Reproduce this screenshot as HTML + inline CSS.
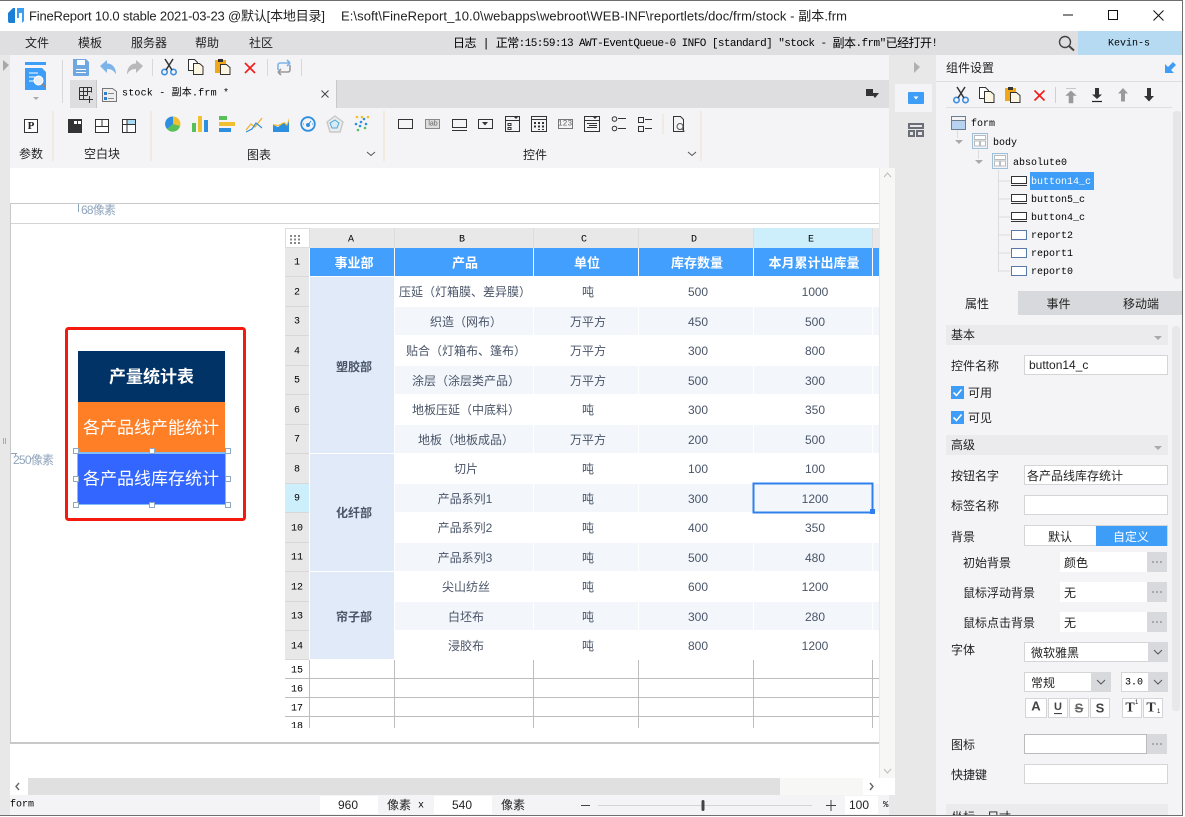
<!DOCTYPE html>
<html lang="zh"><head><meta charset="utf-8"><title>FineReport</title>
<style>
html,body{margin:0;padding:0;width:1185px;height:817px;overflow:hidden;background:#fff}
svg{display:block}
text{font-family:"Liberation Sans","Noto Sans CJK SC",sans-serif;font-size:12px;fill:#222;dominant-baseline:central;white-space:pre;transform:translateY(1px)}
.m{font-family:"Liberation Mono","Noto Sans CJK SC",monospace;font-size:10px;fill:#000}
.c{text-anchor:middle}
.t{fill:#4a5568}
.h{fill:#fff;font-weight:700;font-size:13px}
.b{font-weight:700;fill:#4a5568}
.r{shape-rendering:crispEdges}
.i{fill:none;stroke:#333;stroke-width:1}
</style></head><body>
<svg width="1185" height="817" viewBox="0 0 1185 817" xmlns="http://www.w3.org/2000/svg">
<defs>
<g id="sc"><circle cx="3.5" cy="13" r="2.7" fill="none" stroke="#3d8fe0" stroke-width="1.6"/><circle cx="12.5" cy="13" r="2.7" fill="none" stroke="#3d8fe0" stroke-width="1.6"/><path d="M5 11 12 0M11 11 4 0" stroke="#333" stroke-width="1.5" fill="none"/></g>
<g id="cp"><path d="M.5.5h6l3 3v8h-9z" fill="#fff" stroke="#333"/><path d="M5.5 4.5h6l3.500 3v8h-9.500z" fill="#fdf6e3" stroke="#333"/></g>
<g id="pa"><rect x="0" y="1" width="11" height="13" fill="#f0a818"/><rect x="3" y="0" width="5" height="3" fill="#333"/><path d="M5.500 5.500h6l3.500 3v7h-9.500z" fill="#fdf6e3" stroke="#333"/></g>
<g id="x"><path d="M.5.500 10.500 10.500M10.500.500.500 10.500" stroke="#f02020" stroke-width="1.700" fill="none"/></g>
<g id="bi"><rect x=".5" y=".5" width="15" height="7" fill="#fff" stroke="#333"/><path d="M0 9.500h16" stroke="#333"/></g>
<g id="ri"><rect x=".5" y=".5" width="15" height="9" fill="#fff" stroke="#5878a8"/></g>
<g id="ci"><rect x=".5" y=".5" width="15" height="15" fill="#eef4fa" stroke="#9dbfd8"/><rect x="2.500" y="2.500" width="11" height="4" fill="#fff" stroke="#bbb"/><rect x="2.500" y="8" width="5" height="5" fill="#fff" stroke="#bbb"/><rect x="8.500" y="8" width="5" height="5" fill="#fff" stroke="#bbb"/></g>
<g id="dd"><rect x="0" y="0" width="20" height="20" fill="#d8d9dc"/><path d="M6 8l4 4 4-4" fill="none" stroke="#555"/></g>
<g id="dots"><rect x="0" y="0" width="20" height="20" fill="#d8d9dc"/><path d="M5 10h2M9 10h2M13 10h2" stroke="#777" stroke-width="1"/></g>
</defs>

<!-- base -->
<rect class="r" width="1185" height="817" fill="#fff"/>
<rect class="r" x="0" y="0" width="1183" height="1" fill="#6e6e6e"/>
<rect class="r" x="0" y="31" width="1182" height="24" fill="#dfdfe1"/>
<rect class="r" x="0" y="55" width="10" height="760" fill="#e8e8e8"/>
<rect class="r" x="10" y="55" width="879" height="113" fill="#f4f4f6"/>
<rect class="r" x="70" y="80" width="819" height="28" fill="#dedee0"/>
<rect class="r" x="889" y="55" width="47" height="760" fill="#e8e8e8"/>
<rect class="r" x="936" y="55" width="246" height="760" fill="#f4f4f6"/>
<rect class="r" x="880" y="168" width="15" height="610" fill="#f7f7f5"/>
<rect class="r" x="1182" y="0" width="1" height="816" fill="#6e6e6e"/>
<rect class="r" x="0" y="815" width="1183" height="1" fill="#6e6e6e"/>

<!-- title -->
<path d="M8 13L13 8h2v15h-5q-2 0-2-2z" fill="#1b7fd6"/><path d="M17 8h7v13l-2 2V13h-3v5h-2z" fill="#3d9df0"/>
<text x="29" y="15" style="font-size:13px" textLength="296" lengthAdjust="spacing">FineReport 10.0 stable 2021-03-23 @默认[本地目录]</text>
<text x="341" y="15" style="font-size:13px" textLength="506" lengthAdjust="spacing">E:\soft\FineReport_10.0\webapps\webroot\WEB-INF\reportlets/doc/frm/stock - 副本.frm</text>
<path d="M1063 15h10" stroke="#111" fill="none"/>
<rect x="1108.500" y="10.500" width="9" height="9" fill="none" stroke="#111"/>
<path d="M1153.500 10.500l10 10M1163.500 10.500l-10 10" stroke="#111" fill="none"/>

<!-- menu -->
<text x="25" y="42">文件</text><text x="78" y="42">模板</text><text x="131" y="42">服务器</text><text x="195" y="42">帮助</text><text x="249" y="42">社区</text>
<text x="453" y="43" class="m" style="font-size:11px" textLength="485" lengthAdjust="spacing"><tspan style="font-size:12px">日志 | 正常</tspan>:15:59:13 AWT-EventQueue-0 INFO [standard] "stock - <tspan style="font-size:12px">副本</tspan>.frm"<tspan style="font-size:12px">已经打开</tspan>!</text>
<circle cx="1065" cy="42" r="5.500" fill="none" stroke="#444" stroke-width="1.400"/><path d="M1069 46l5 4.500" stroke="#444" stroke-width="2"/>
<rect class="r" x="1078" y="31" width="104" height="24" fill="#b5daf2"/>
<text x="1129" y="43" class="m c" style="font-size:10px">Kevin-s</text>

<!-- toolbar top -->
<path d="M3 60l6 5-6 6z" fill="#a8a8a8"/>
<rect class="r" x="25" y="62" width="21" height="3" fill="#3d9df7"/>
<path d="M25 68h17l4 4v18H25z" fill="#3d9df7"/>
<path d="M29 73h9M29 77h6M29 81h5" stroke="#fff" fill="none"/>
<circle cx="38.500" cy="80.500" r="4.500" fill="#e8eef5" stroke="#fff"/><path d="M42 84l3 3" stroke="#888" stroke-width="2"/>
<path d="M33 97h6l-3 3z" fill="#aaa"/>
<rect class="r" x="62" y="60" width="1" height="43" fill="#d8d8d8"/>
<path d="M73 59h13l3 3v13a1 1 0 0 1-1 1H74a1 1 0 0 1-1-1z" fill="#6fa8e0"/><rect class="r" x="77" y="60" width="8" height="5" fill="#fff"/><rect class="r" x="76" y="69" width="10" height="1" fill="#fff"/><rect class="r" x="76" y="72" width="10" height="1" fill="#fff"/>
<path d="M100 66l7-6v3.500c5 0 9 3.500 9 11-2-4-5-5.500-9-5.500V73z" fill="#7db3e8"/>
<path d="M143 66l-7-6v3.500c-5 0-9 3.500-9 11 2-4 5-5.500 9-5.500V73z" fill="#b8b8ba"/>
<rect class="r" x="152" y="59" width="1" height="17" fill="#d8d8d8"/>
<use href="#sc" x="161" y="59"/><use href="#cp" x="188" y="59"/><use href="#pa" x="215" y="59"/><use href="#x" x="244.500" y="62.500"/>
<rect class="r" x="267" y="59" width="1" height="17" fill="#d8d8d8"/>
<path d="M278 70v-5a2 2 0 0 1 2-2h10M290 63l-3-3M290 63l-3 3" fill="none" stroke="#7db3e8" stroke-width="1.600"/>
<path d="M290 65v5a2 2 0 0 1-2 2h-10M278 72l3 3M278 72l3-3" fill="none" stroke="#999" stroke-width="1.600"/>
<rect class="r" x="301" y="59" width="1" height="17" fill="#d8d8d8"/>

<!-- tabs -->
<rect class="r" x="97" y="80" width="239" height="28" fill="#f4f4f6"/>
<rect class="r" x="96" y="80" width="1" height="28" fill="#c8c8ca"/><rect class="r" x="336" y="80" width="1" height="28" fill="#c8c8ca"/>
<path d="M79.500 87.500h12v5M79.500 87.500v12h7M83.500 87.500v12M87.500 87.500v8M79.500 91.500h12M79.500 95.500h8M89.500 96v7M86 99.500h7" stroke="#333" fill="none"/>
<path d="M102.500 88.500h10l4 3v10h-14z" fill="#eee" stroke="#777"/><rect class="r" x="104" y="92" width="3" height="3" fill="#2f7fd0"/><rect class="r" x="104" y="97" width="3" height="3" fill="#2f7fd0"/><path d="M108 93.500h6M108 98.500h6" stroke="#888"/>
<text x="122" y="93" class="m" style="font-size:10px" textLength="107" lengthAdjust="spacing">stock - 副本.frm *</text>
<path d="M321.500 90.500l7 7M328.500 90.500l-7 7" stroke="#444" fill="none"/>
<rect class="r" x="866" y="89" width="7" height="7" fill="#333"/><path d="M871 93h8l-4 5z" fill="#333"/>

<!-- ribbon -->
<rect x="24.500" y="119.500" width="13" height="13" fill="#fff" stroke="#333"/>
<text x="31" y="125" class="c" style="font-family:'Liberation Serif',serif;font-weight:700;font-size:11px">P</text>
<rect class="r" x="52" y="111" width="2" height="50" fill="#efebe0"/>
<rect class="r" x="68" y="119" width="14" height="14" fill="#333"/><rect class="r" x="74" y="121" width="3" height="3" fill="#fff"/><rect class="r" x="78" y="121" width="3" height="3" fill="#fff"/>
<rect x="95.500" y="119.500" width="13" height="13" fill="#fff" stroke="#333"/><path d="M95.500 126.500h13M102 119.500v7" stroke="#333"/>
<rect x="122.500" y="119.500" width="13" height="13" fill="#fff" stroke="#333"/><rect class="r" x="127" y="120" width="8" height="4" fill="#a9dcf3"/><path d="M122.500 124.500h13M127 119.500v13" stroke="#333"/>
<rect class="r" x="150" y="111" width="2" height="50" fill="#efebe0"/>
<!-- charts -->
<circle cx="173" cy="124" r="7.500" fill="#f0c030"/><path d="M173 124l7 2a7.500 7.500 0 0 1-13 3z" fill="#58c058"/><path d="M173 124l-6 5a7.500 7.500 0 0 1 6-12.500z" fill="#2d8fe0"/>
<rect class="r" x="192" y="123" width="4" height="9" fill="#58c058"/><rect class="r" x="198" y="116" width="4" height="16" fill="#f0c030"/><rect class="r" x="204" y="120" width="4" height="12" fill="#2d8fe0"/>
<rect class="r" x="219" y="116" width="8" height="4" fill="#58c058"/><rect class="r" x="219" y="122" width="16" height="4" fill="#f0c030"/><rect class="r" x="219" y="128" width="12" height="4" fill="#2d8fe0"/>
<path d="M246 130l5-6 4 3 7-9" fill="none" stroke="#f0b030" stroke-width="1.200"/><path d="M246 132l6-3 4-6 6 5" fill="none" stroke="#2d8fe0" stroke-width="1.200"/>
<path d="M273 124l5 1 6-3 3 2 2-6v8h-16z" fill="#f0c030"/><path d="M273 125l5 2 6-4 3 3 2-5v11h-16z" fill="#2d8fe0"/>
<circle cx="308" cy="124" r="6.800" fill="none" stroke="#2d8fe0" stroke-width="1.800"/><circle cx="308" cy="125" r="2" fill="#2d8fe0"/><path d="M308 125l3-4M303 124h1M313 124h-1" stroke="#2d8fe0"/>
<path d="M335 116l8 6-3 10h-10l-3-10z" fill="#ececec" stroke="#c8c8c8" stroke-width="1.400"/><path d="M335 120l4 3-2 5h-5l-2-5z" fill="#d8eaf6" stroke="#4aa8d8"/>
<g fill="#2d8fe0"><circle cx="356" cy="124" r="1.300"/><circle cx="361" cy="122" r="1.300"/><circle cx="366" cy="124" r="1.300"/><circle cx="360" cy="126" r="1.300"/><circle cx="364" cy="119" r="1.300"/></g><g fill="#f0c030"><circle cx="357" cy="117" r="1.300"/><circle cx="362" cy="117" r="1.300"/><circle cx="368" cy="117" r="1.300"/></g><g fill="#58c058"><circle cx="358" cy="130" r="1.300"/><circle cx="365" cy="128" r="1.300"/></g>
<rect class="r" x="383" y="111" width="2" height="50" fill="#efebe0"/>
<!-- controls -->
<g class="i">
<rect x="398.500" y="119.500" width="14" height="9"/>
<rect x="425.500" y="119.500" width="14" height="9" fill="#ddd" stroke="#888"/>
<rect x="452.500" y="119.500" width="14" height="8"/><path d="M452 130.500h15"/>
<rect x="478.500" y="119.500" width="14" height="9"/>
<rect x="505.500" y="116.500" width="14" height="15"/><path d="M505.500 120.500h14M508 123.500h3v2h-3zM508 127.500h3v2h-3z"/>
<rect x="531.500" y="116.500" width="15" height="15"/><path d="M531.500 119.500h15"/>
<rect x="558.500" y="119.500" width="14" height="9" stroke="#777"/>
<rect x="584.500" y="116.500" width="15" height="15"/><path d="M584.500 120.500h15M587 123.500h10M589 125.500h8M587 127.500h10"/>
<path d="M618 118.500h8M618 128.500h8"/>
<circle cx="614.500" cy="119" r="2.300"/><circle cx="614.500" cy="128.500" r="2.300"/>
<rect x="638.500" y="117.500" width="5" height="5"/><rect x="638.500" y="126.500" width="5" height="5"/><path d="M645 119.500h7M645 128.500h7"/>
<path d="M673.500 116.500h7l3 3v12h-10z"/><circle cx="680" cy="126.500" r="3" stroke="#555"/><path d="M682 129l2.500 2.500" stroke="#555"/>
</g>
<text x="433" y="123" class="c" style="font-size:7px;fill:#666">lab</text>
<path d="M482 122h6l-3 3.500z" fill="#333"/>
<path d="M514 117h4l-2 2z" fill="#333"/>
<path d="M534 122h2v2h-2zM538 122h2v2h-2zM542 122h2v2h-2zM534 125.500h2v2h-2zM538 125.500h2v2h-2zM542 125.500h2v2h-2zM538 129h2v1h-2zM542 129h2v1h-2z" fill="#333"/>
<text x="565" y="123" class="c m" style="font-size:8px;fill:#666">123</text>
<path d="M593 117h4l-2 2z" fill="#333"/>
<rect class="r" x="662" y="114" width="2" height="20" fill="#efebe0"/>
<rect class="r" x="700" y="111" width="2" height="50" fill="#efebe0"/>
<text x="19" y="153">参数</text><text x="84" y="153">空白块</text><text x="247" y="154">图表</text><text x="523" y="154">控件</text>
<path d="M367 152l4 3.500 4-3.500M688 152l4 3.500 4-3.500" fill="none" stroke="#555"/>

<!-- canvas -->
<rect class="r" x="10" y="168" width="870" height="610" fill="#fff"/>
<rect class="r" x="10" y="203" width="870" height="1" fill="#c8c8c8"/>
<rect class="r" x="10" y="223" width="870" height="1" fill="#d4d4d4"/>
<rect class="r" x="10" y="203" width="1" height="541" fill="#c8c8c8"/>
<rect class="r" x="10" y="742" width="870" height="2" fill="#c8c8c8"/>
<path d="M78.500 204v8M11 453.500h6M15.500 453.500v3" stroke="#8fa5bd" fill="none"/>
<text x="81" y="209" style="fill:#8fa5bd" textLength="35" lengthAdjust="spacing">68像素</text>
<text x="13" y="459" style="fill:#8fa5bd" textLength="41" lengthAdjust="spacing">250像素</text>
<path d="M3.500 438v6M5.500 438v6" stroke="#aaa" fill="none"/>

<!-- left widget -->
<rect x="66.500" y="328.500" width="178" height="191" rx="2" fill="#fff" stroke="#f51a10" stroke-width="3"/>
<rect class="r" x="78" y="351" width="147" height="51" fill="#023366"/>
<rect class="r" x="78" y="402" width="147" height="51" fill="#ff7f27"/>
<rect class="r" x="77" y="452" width="149" height="53" fill="#84bcf8"/>
<rect class="r" x="78" y="454" width="147" height="50" fill="#3366ff"/>
<text x="151.500" y="376" class="c" style="fill:#fff;font-weight:700;font-size:17px">产量统计表</text>
<text x="151" y="427" class="c" style="fill:#fff;font-size:17px">各产品线产能统计</text>
<text x="151" y="478" class="c" style="fill:#fff;font-size:17px">各产品线库存统计</text>
<g fill="#fff" stroke="#8fa9c4">
<rect x="73.500" y="448.500" width="5" height="5"/><rect x="149.500" y="448.500" width="5" height="5"/><rect x="225.500" y="448.500" width="5" height="5"/>
<rect x="73.500" y="476.500" width="5" height="5"/><rect x="225.500" y="476.500" width="5" height="5"/>
<rect x="73.500" y="502.500" width="5" height="5"/><rect x="149.500" y="502.500" width="5" height="5"/><rect x="225.500" y="502.500" width="5" height="5"/>
</g>

<!-- table gutter -->
<rect class="r" x="285" y="228" width="595" height="20" fill="#e8e8e8"/>
<rect class="r" x="285" y="248" width="24" height="412" fill="#e8e8e8"/>
<rect x="285.500" y="228.500" width="24" height="19" fill="#fff" stroke="#ddd"/>
<path d="M290 235h2v2h-2zM294 235h2v2h-2zM298 235h2v2h-2zM290 238.500h2v2h-2zM294 238.500h2v2h-2zM298 238.500h2v2h-2zM290 242h2v2h-2zM294 242h2v2h-2zM298 242h2v2h-2z" fill="#888"/>
<rect class="r" x="754" y="228" width="118" height="20" fill="#cdeffb"/>
<rect class="r" x="285" y="484" width="24" height="28" fill="#cdeffb"/>
<path d="M394.500 228v20M533.500 228v20M638.500 228v20M753.500 228v20M872.500 228v20" stroke="#dcdcdc" fill="none"/>
<path d="M285 276.500h24M285 306.500h24M285 335.500h24M285 365.500h24M285 394.500h24M285 424.500h24M285 453.500h24M285 483.500h24M285 512.500h24M285 542.500h24M285 571.500h24M285 601.500h24M285 630.500h24M285 659.500h24" stroke="#d8d8d8" fill="none"/>
<text class="m" x="351" y="239" text-anchor="middle">A</text><text class="m" x="462" y="239" text-anchor="middle">B</text><text class="m" x="584" y="239" text-anchor="middle">C</text><text class="m" x="694" y="239" text-anchor="middle">D</text><text class="m" x="811" y="239" text-anchor="middle">E</text>
<text class="m" x="297" y="262" text-anchor="middle">1</text><text class="m" x="297" y="292" text-anchor="middle">2</text><text class="m" x="297" y="321" text-anchor="middle">3</text><text class="m" x="297" y="351" text-anchor="middle">4</text><text class="m" x="297" y="380" text-anchor="middle">5</text><text class="m" x="297" y="410" text-anchor="middle">6</text><text class="m" x="297" y="439" text-anchor="middle">7</text><text class="m" x="297" y="469" text-anchor="middle">8</text><text class="m" x="297" y="498" text-anchor="middle">9</text><text class="m" x="297" y="528" text-anchor="middle">10</text><text class="m" x="297" y="557" text-anchor="middle">11</text><text class="m" x="297" y="587" text-anchor="middle">12</text><text class="m" x="297" y="616" text-anchor="middle">13</text><text class="m" x="297" y="646" text-anchor="middle">14</text><text class="m" x="297" y="670" text-anchor="middle">15</text><text class="m" x="297" y="689" text-anchor="middle">16</text><text class="m" x="297" y="708" text-anchor="middle">17</text>
<svg x="285" y="717" width="24" height="11"><text class="m" x="12" y="9" text-anchor="middle">18</text></svg>

<!-- table body -->
<rect class="r" x="310" y="248" width="570" height="28" fill="#429ffe"/>
<path d="M394.500 248v28M533.500 248v28M638.500 248v28M753.500 248v28M872.500 248v28" stroke="#fff" fill="none"/>
<g class="r" fill="#f3f7fc">
<rect x="395" y="307" width="485" height="28"/><rect x="395" y="366" width="485" height="28"/><rect x="395" y="425" width="485" height="28"/><rect x="395" y="484" width="485" height="28"/><rect x="395" y="543" width="485" height="28"/><rect x="395" y="602" width="485" height="28"/>
</g>
<path d="M533.500 307v28M638.500 307v28M753.500 307v28M872.500 307v28M533.500 366v28M638.500 366v28M753.500 366v28M872.500 366v28M533.500 425v28M638.500 425v28M753.500 425v28M872.500 425v28M533.500 484v28M638.500 484v28M753.500 484v28M872.500 484v28M533.500 543v28M638.500 543v28M753.500 543v28M872.500 543v28M533.500 602v28M638.500 602v28M753.500 602v28M872.500 602v28" stroke="#fff" fill="none"/>
<g class="r" fill="#e0eaf8">
<rect x="310" y="277" width="84" height="176"/><rect x="310" y="454" width="84" height="117"/><rect x="310" y="572" width="84" height="87"/>
</g>
<path d="M309.500 660v68M394.500 660v68M533.500 660v68M638.500 660v68M753.500 660v68M872.500 660v68M285 678.500h595M285 697.500h595M285 716.500h595" stroke="#bdbdbd" fill="none"/>

<text class="h c" x="354" y="262">事业部</text><text class="h c" x="465" y="262">产品</text><text class="h c" x="587" y="262">单位</text><text class="h c" x="697" y="262">库存数量</text><text class="h c" x="814" y="262">本月累计出库量</text>
<text class="b c" x="354" y="366">塑胶部</text><text class="b c" x="354" y="512">化纤部</text><text class="b c" x="354" y="616">帘子部</text>
<text class="t c" x="465" y="291">压延（灯箱膜、差异膜）</text><text class="t c" x="588" y="291">吨</text><text class="t c" x="698" y="291">500</text><text class="t c" x="815" y="291">1000</text>
<text class="t c" x="466" y="321">织造（网布）</text><text class="t c" x="588" y="321">万平方</text><text class="t c" x="698" y="321">450</text><text class="t c" x="815" y="321">500</text>
<text class="t c" x="466" y="350">贴合（灯箱布、篷布）</text><text class="t c" x="588" y="350">万平方</text><text class="t c" x="698" y="350">300</text><text class="t c" x="815" y="350">800</text>
<text class="t c" x="466" y="380">涂层（涂层类产品）</text><text class="t c" x="588" y="380">万平方</text><text class="t c" x="698" y="380">500</text><text class="t c" x="815" y="380">300</text>
<text class="t c" x="466" y="409">地板压延（中底料）</text><text class="t c" x="588" y="409">吨</text><text class="t c" x="698" y="409">300</text><text class="t c" x="815" y="409">350</text>
<text class="t c" x="466" y="439">地板（地板成品）</text><text class="t c" x="588" y="439">万平方</text><text class="t c" x="698" y="439">200</text><text class="t c" x="815" y="439">500</text>
<text class="t c" x="466" y="468">切片</text><text class="t c" x="588" y="468">吨</text><text class="t c" x="698" y="468">100</text><text class="t c" x="815" y="468">100</text>
<text class="t c" x="465" y="498">产品系列1</text><text class="t c" x="588" y="498">吨</text><text class="t c" x="698" y="498">300</text><text class="t c" x="815" y="498">1200</text>
<text class="t c" x="465" y="527">产品系列2</text><text class="t c" x="588" y="527">吨</text><text class="t c" x="698" y="527">400</text><text class="t c" x="815" y="527">350</text>
<text class="t c" x="465" y="557">产品系列3</text><text class="t c" x="588" y="557">吨</text><text class="t c" x="698" y="557">500</text><text class="t c" x="815" y="557">480</text>
<text class="t c" x="466" y="586">尖山纺丝</text><text class="t c" x="588" y="586">吨</text><text class="t c" x="698" y="586">600</text><text class="t c" x="815" y="586">1200</text>
<text class="t c" x="466" y="616">白坯布</text><text class="t c" x="588" y="616">吨</text><text class="t c" x="698" y="616">300</text><text class="t c" x="815" y="616">280</text>
<text class="t c" x="466" y="645">浸胶布</text><text class="t c" x="588" y="645">吨</text><text class="t c" x="698" y="645">800</text><text class="t c" x="815" y="645">1200</text>
<rect x="753.500" y="483.500" width="119" height="29" fill="none" stroke="#2f80ed" stroke-width="2"/>
<rect class="r" x="870" y="509" width="5" height="5" fill="#2f80ed"/>
<rect class="r" x="879" y="168" width="1" height="610" fill="#e8e8e4"/>

<!-- scroll -->
<path d="M884 177l3.500-4 3.500 4M884 769l3.500 4 3.500-4" fill="none" stroke="#bbb"/>
<rect class="r" x="10" y="778" width="885" height="17" fill="#fff"/>
<rect class="r" x="28" y="778" width="752" height="17" fill="#e0e0e0"/>
<rect class="r" x="780" y="778" width="83" height="17" fill="#f7f7f5"/>
<path d="M19 783l-3 3.500 3 3.500M870 783l3 3.500-3 3.500" fill="none" stroke="#666" stroke-width="1.400"/>

<!-- status -->
<rect class="r" x="10" y="795" width="879" height="20" fill="#f4f4f6"/>
<text class="m" x="10" y="804" style="font-size:10px">form</text>
<rect class="r" x="320" y="796" width="58" height="18" fill="#fff"/><text class="c" x="348" y="804">960</text>
<text x="387" y="804">像素</text><text class="m" x="418" y="805">x</text>
<rect class="r" x="434" y="796" width="58" height="18" fill="#fff"/><text class="c" x="462" y="804">540</text>
<text x="501" y="804">像素</text>
<path d="M581 805.500h9M826 805.500h10M831 800v11" stroke="#444" fill="none"/>
<rect class="r" x="598" y="805" width="214" height="1" fill="#d4d4d4"/>
<rect x="701.500" y="800" width="3" height="11" rx="1.500" fill="#444"/>
<rect class="r" x="845" y="796" width="33" height="18" fill="#fff"/><text class="c" x="859" y="804">100</text>
<text class="m" x="883" y="804" style="font-size:9px">%</text>

<!-- side strip -->
<path d="M914 62l6 5-6 6z" fill="#b0b0b0"/>
<rect class="r" x="895" y="84" width="37" height="28" fill="#f4f4f6"/>
<rect x="908" y="92" width="16" height="12" rx="1" fill="#3d9df7"/><path d="M913.500 96.500h5l-2.500 3z" fill="#fff"/>
<g fill="none" stroke="#6b6e76" stroke-width="2"><rect x="909" y="124" width="14" height="4"/><rect x="909" y="131" width="5" height="5"/><rect x="917" y="131" width="6" height="5"/></g>

<!-- right panel -->
<text x="946" y="67">组件设置</text>
<path d="M1165 64v9h9l-3-3 5-5-3-3-5 5z" fill="#3d9df7"/>
<rect class="r" x="936" y="81" width="246" height="1" fill="#dedede"/>
<use href="#sc" x="953" y="87"/><use href="#cp" x="979" y="87"/><use href="#pa" x="1005" y="87"/><use href="#x" x="1034" y="90"/>
<rect class="r" x="1055" y="87" width="1" height="16" fill="#d0d0d0"/>
<path d="M1066 88.500h10M1071 91l-5 4.500h3V103h4v-7.500h3z" fill="#9a9a9a" stroke="#9a9a9a" stroke-width=".6"/>
<path d="M1092 101.500h10" stroke="#222" stroke-width="1.200" fill="none"/><path d="M1097 99l-5-4.500h3V88h4v6.500h3z" fill="#333"/>
<path d="M1123 88l-5 5.500h3v8h4v-8h3z" fill="#9a9a9a"/>
<path d="M1149 101.500l-5-5.500h3v-8h4v8h3z" fill="#333"/>
<rect class="r" x="946" y="107" width="226" height="1" fill="#dedede"/>
<rect class="r" x="1173" y="111" width="8" height="168" rx="3" fill="#e6e6e8"/>
<!-- tree -->
<path d="M957.500 130v8M978.500 150v9M998.500 170v102M998.500 181h12M998.500 199h12M998.500 217h12M998.500 235h12M998.500 253h12M998.500 271h12" stroke="#ddd" fill="none"/>
<rect x="951.500" y="116.500" width="14" height="13" fill="#b8d2f2" stroke="#6d7e92"/><rect class="r" x="952" y="117" width="13" height="3" fill="#f4f4f6"/><path d="M952 120.500h13" stroke="#6d7e92"/>
<text class="m" x="971" y="123.500">form</text>
<path d="M955 140h8l-4 4z" fill="#aaa"/><use href="#ci" x="972" y="133"/><text class="m" x="993" y="142.500">body</text>
<path d="M975 160h8l-4 4z" fill="#aaa"/><use href="#ci" x="992" y="153"/><text class="m" x="1013" y="162.500">absolute0</text>
<rect class="r" x="1030" y="172" width="64" height="18" fill="#3d9df7"/>
<use href="#bi" x="1011" y="176"/><use href="#bi" x="1011" y="194"/><use href="#bi" x="1011" y="212"/>
<use href="#ri" x="1011" y="230"/><use href="#ri" x="1011" y="248"/><use href="#ri" x="1011" y="266"/>
<text class="m" x="1031" y="181.500" style="fill:#fff">button14_c</text><text class="m" x="1031" y="199.500">button5_c</text><text class="m" x="1031" y="217.500">button4_c</text><text class="m" x="1031" y="235.500">report2</text><text class="m" x="1031" y="253.500">report1</text><text class="m" x="1031" y="271.500">report0</text>
<!-- tabs -->
<rect class="r" x="1018" y="291" width="164" height="24" fill="#d8d9dc"/>
<text class="c" x="977" y="303">属性</text><text class="c" x="1058.500" y="303">事件</text><text class="c" x="1141" y="303">移动端</text>
<rect class="r" x="1172" y="326" width="8" height="385" rx="3" fill="#e8e8ea"/>
<!-- sections -->
<rect class="r" x="946" y="325" width="222" height="20" fill="#ebebed"/>
<text x="951" y="334">基本</text><path d="M1154 336h8l-4 4z" fill="#aaa"/>
<text x="951" y="365">控件名称</text>
<rect x="1024.500" y="355.500" width="143" height="19" fill="#fff" stroke="#d5d5d8"/><text x="1029" y="364">button14_c</text>
<rect class="r" x="951" y="386" width="13" height="13" fill="#3d9df7"/><path d="M953.500 392.500l3 3 5-6" fill="none" stroke="#fff" stroke-width="1.600"/><text x="968" y="392">可用</text>
<rect class="r" x="951" y="411" width="13" height="13" fill="#3d9df7"/><path d="M953.500 417.500l3 3 5-6" fill="none" stroke="#fff" stroke-width="1.600"/><text x="968" y="417">可见</text>
<rect class="r" x="946" y="435" width="222" height="20" fill="#ebebed"/>
<text x="951" y="444">高级</text><path d="M1154 446h8l-4 4z" fill="#aaa"/>
<text x="951" y="475">按钮名字</text>
<rect x="1024.500" y="465.500" width="143" height="19" fill="#fff" stroke="#d5d5d8"/><text x="1027" y="475">各产品线库存统计</text>
<text x="951" y="505">标签名称</text>
<rect x="1024.500" y="495.500" width="143" height="19" fill="#fff" stroke="#d5d5d8"/>
<text x="951" y="536">背景</text>
<rect x="1024.500" y="525.500" width="143" height="20" fill="#fff" stroke="#d5d5d8"/>
<rect class="r" x="1096" y="526" width="71" height="20" fill="#3d9df7"/>
<text class="c" x="1060" y="536">默认</text><text class="c" x="1131" y="536" style="fill:#fff">自定义</text>
<text x="963" y="562">初始背景</text>
<rect class="r" x="1060" y="552" width="87" height="20" fill="#fff"/><use href="#dots" x="1147" y="552"/><text x="1064" y="562">颜色</text>
<text x="963" y="592">鼠标浮动背景</text>
<rect class="r" x="1060" y="582" width="87" height="20" fill="#fff"/><use href="#dots" x="1147" y="582"/><text x="1064" y="592">无</text>
<text x="963" y="622">鼠标点击背景</text>
<rect class="r" x="1060" y="612" width="87" height="20" fill="#fff"/><use href="#dots" x="1147" y="612"/><text x="1064" y="622">无</text>
<text x="951" y="649">字体</text>
<rect x="1024.500" y="642.500" width="143" height="19" fill="#fff" stroke="#d5d5d8"/><use href="#dd" x="1148" y="642"/><text x="1031" y="652">微软雅黑</text>
<rect x="1024.500" y="672.500" width="86" height="19" fill="#fff" stroke="#d5d5d8"/><use href="#dd" x="1091" y="672"/><text x="1031" y="682">常规</text>
<rect x="1121.500" y="672.500" width="46" height="19" fill="#fff" stroke="#d5d5d8"/><use href="#dd" x="1148" y="672"/><text class="m" x="1125" y="682">3.0</text>
<g fill="#fff" stroke="#d5d5d8">
<rect x="1025.500" y="698.500" width="21" height="19"/><rect x="1048.500" y="698.500" width="19" height="19"/><rect x="1069.500" y="698.500" width="19" height="19"/><rect x="1090.500" y="698.500" width="19" height="19"/><rect x="1122.500" y="698.500" width="19" height="19"/><rect x="1143.500" y="698.500" width="19" height="19"/>
</g>
<text class="c" x="1036" y="705" style="font-weight:700;font-size:13px;fill:#444">A</text>
<text class="c" x="1058" y="706" style="font-weight:700;font-size:11px;fill:#444;text-decoration:underline">U</text>
<text class="c" x="1079" y="707" style="font-weight:700;font-size:13px;fill:#666;text-decoration:line-through">S</text>
<text class="c" x="1100" y="707" style="font-weight:700;font-size:13px;fill:#444">S</text>
<text class="c" x="1130" y="707" style="font-family:'Liberation Serif',serif;font-weight:700;font-size:14px;fill:#333">T</text><text x="1135" y="702" style="font-size:6px">1</text>
<text class="c" x="1151" y="707" style="font-family:'Liberation Serif',serif;font-weight:700;font-size:14px;fill:#333">T</text><text x="1157" y="711" style="font-size:6px">1</text>
<text x="951" y="744">图标</text>
<rect x="1024.500" y="734.500" width="122" height="19" fill="#fff" stroke="#bbb"/><use href="#dots" x="1147" y="734"/>
<text x="951" y="774">快捷键</text>
<rect x="1024.500" y="764.500" width="143" height="19" fill="#fff" stroke="#d5d5d8"/>
<rect class="r" x="946" y="804" width="222" height="11" fill="#ebebed"/>
<svg x="946" y="804" width="222" height="11"><text x="5" y="12">坐标、尺寸</text></svg>
<rect class="r" x="0" y="815" width="1183" height="1" fill="#6e6e6e"/>
</svg>
</body></html>
